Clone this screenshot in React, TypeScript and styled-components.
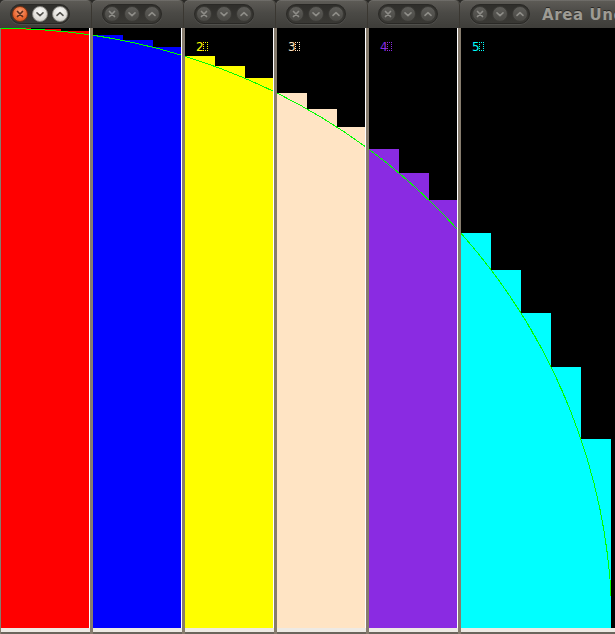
import React from 'react';
import styled, { createGlobalStyle } from 'styled-components';

const ELLIPSE_A = 611;
const ELLIPSE_B = 600;
const ORIGIN_X = 1;
const PLOT_H = 600;
const BAR_W = 30;
const DOMAIN_END = 611;

const GlobalStyle = createGlobalStyle`
  html, body {
    margin: 0;
    padding: 0;
    background: #2c2b28;
    overflow: hidden;
  }
  body {
    width: 615px;
    height: 634px;
  }
`;

const Desktop = styled.div`
  display: flex;
  width: 615px;
  height: 634px;
  overflow: hidden;
`;

const Win = styled.div<{ $w: number }>`
  flex: 0 0 ${(p) => p.$w}px;
  width: ${(p) => p.$w}px;
  display: flex;
  flex-direction: column;
`;

const TitleBar = styled.div`
  height: 28px;
  flex: 0 0 28px;
  box-sizing: border-box;
  display: flex;
  align-items: flex-start;
  padding: 4px 0 0 10px;
  border-radius: 5px 5px 0 0;
  background: linear-gradient(#5e5c57, #4b4a46 45%, #3e3d39);
  box-shadow: inset 0 1px 0 rgba(255, 255, 255, 0.1), inset -1px 0 0 #3a3731;
  overflow: hidden;
  white-space: nowrap;
`;

const ButtonPill = styled.div`
  flex: 0 0 auto;
  box-sizing: border-box;
  width: 60px;
  height: 20px;
  display: flex;
  gap: 4px;
  padding: 1px 1px;
  border: 1px solid #2a2926;
  border-radius: 10px;
  background: linear-gradient(#2f2e2b, #3a3935);
  box-shadow: 0 1px 0 rgba(255, 255, 255, 0.08);
`;

const CircleButton = styled.div<{ $kind: 'close' | 'light' | 'dim' }>`
  width: 16px;
  height: 16px;
  box-sizing: border-box;
  border-radius: 50%;
  display: flex;
  align-items: center;
  justify-content: center;
  border: 1px solid
    ${(p) => (p.$kind === 'close' ? '#7a3414' : p.$kind === 'light' ? '#8d8b86' : '#3b3a36')};
  background: ${(p) =>
    p.$kind === 'close'
      ? 'radial-gradient(circle at 50% 35%, #f8a078, #ea6a35 55%, #c9480f)'
      : p.$kind === 'light'
      ? 'radial-gradient(circle at 50% 35%, #fbfaf8, #e3e1dc 55%, #c4c2bd)'
      : 'linear-gradient(#5d5c58, #4a4945)'};
  svg {
    display: block;
  }
`;

const Title = styled.span`
  margin: 1px 0 0 12px;
  font-family: 'DejaVu Sans', sans-serif;
  font-weight: bold;
  font-size: 15px;
  line-height: 20px;
  letter-spacing: 0.6px;
  color: #9d9b94;
  text-shadow: 0 -1px 0 #2a2926;
`;

const Frame = styled.div`
  flex: 1 1 auto;
  display: flex;
  flex-direction: column;
  border-left: 1px solid #867c6e;
  border-right: 2px solid #867c6e;
`;

const Canvas = styled.div`
  position: relative;
  height: ${PLOT_H}px;
  flex: 0 0 ${PLOT_H}px;
  background: #000;
  border-right: 1px solid #ffffff;
  overflow: hidden;
  svg {
    display: block;
  }
`;

const Label = styled.div<{ $color: string }>`
  position: absolute;
  left: 11px;
  top: 13px;
  font-family: 'DejaVu Sans', sans-serif;
  font-size: 12px;
  line-height: 12px;
  color: ${(p) => p.$color};
  white-space: nowrap;
`;

const Tofu = styled.span`
  display: inline-block;
  width: 3px;
  height: 7px;
  margin-left: -1px;
  border: 1px dotted currentColor;
  vertical-align: baseline;
`;

const BottomEdge = styled.div`
  flex: 0 0 6px;
  height: 6px;
  box-sizing: border-box;
  background: #eeeae4;
  border-bottom: 2px solid #6b655c;
`;

type Kind = 'close' | 'light' | 'dim';

const Icon: React.FC<{ type: 'x' | 'down' | 'up'; color: string }> = ({ type, color }) => (
  <svg width="14" height="14" viewBox="0 0 14 14">
    {type === 'x' && (
      <path d="M4.5 4.5 L9.5 9.5 M9.5 4.5 L4.5 9.5" stroke={color} strokeWidth="1.7" strokeLinecap="round" fill="none" />
    )}
    {type === 'down' && (
      <path d="M4 5.8 L7 8.6 L10 5.8" stroke={color} strokeWidth="1.6" strokeLinecap="round" strokeLinejoin="round" fill="none" />
    )}
    {type === 'up' && (
      <path d="M4 8.4 L7 5.6 L10 8.4" stroke={color} strokeWidth="1.6" strokeLinecap="round" strokeLinejoin="round" fill="none" />
    )}
  </svg>
);

const Buttons: React.FC<{ focused: boolean }> = ({ focused }) => {
  const closeKind: Kind = focused ? 'close' : 'dim';
  const otherKind: Kind = focused ? 'light' : 'dim';
  const closeColor = focused ? '#5a2c1a' : '#8e8d88';
  const otherColor = focused ? '#55544f' : '#8e8d88';
  return (
    <ButtonPill>
      <CircleButton $kind={closeKind}>
        <Icon type="x" color={closeColor} />
      </CircleButton>
      <CircleButton $kind={otherKind}>
        <Icon type="down" color={otherColor} />
      </CircleButton>
      <CircleButton $kind={otherKind}>
        <Icon type="up" color={otherColor} />
      </CircleButton>
    </ButtonPill>
  );
};

interface WinSpec {
  index: number;
  color: string;
  width: number;
}

const WINDOWS: WinSpec[] = [
  { index: 0, color: '#ff0000', width: 92 },
  { index: 1, color: '#0000ff', width: 92 },
  { index: 2, color: '#ffff00', width: 92 },
  { index: 3, color: '#ffe4c4', width: 92 },
  { index: 4, color: '#8a2be2', width: 92 },
  { index: 5, color: '#00ffff', width: 200 },
];

const curveTop = (globalX: number) => {
  const dx = (globalX - ORIGIN_X) / ELLIPSE_A;
  const h = ELLIPSE_B * Math.sqrt(Math.max(0, 1 - dx * dx));
  return Math.round(PLOT_H - h);
};

const Chart: React.FC<{ left: number; width: number; color: string; id: number }> = ({
  left,
  width,
  color,
  id,
}) => {
  const bars: { x: number; w: number; y: number }[] = [];
  for (let x = 0; x < width; x += BAR_W) {
    const gx = left + x;
    if (gx >= DOMAIN_END) break;
    bars.push({ x, w: Math.min(BAR_W, width - x, DOMAIN_END - gx), y: curveTop(gx) });
  }
  const clipW = Math.max(0, Math.min(width, DOMAIN_END - left));
  return (
    <svg width={width} height={PLOT_H} viewBox={`0 0 ${width} ${PLOT_H}`}>
      <defs>
        <clipPath id={`plot-clip-${id}`}>
          <rect x="0" y="0" width={clipW} height={PLOT_H} />
        </clipPath>
      </defs>
      {bars.map((b, i) => (
        <rect key={i} x={b.x} y={b.y} width={b.w} height={PLOT_H - b.y} fill={color} shapeRendering="crispEdges" />
      ))}
      <ellipse
        clipPath={`url(#plot-clip-${id})`}
        cx={ORIGIN_X - left}
        cy={PLOT_H}
        rx={ELLIPSE_A}
        ry={ELLIPSE_B - 0.5}
        fill="none"
        stroke="#00ff00"
        strokeWidth="1"
        shapeRendering="crispEdges"
      />
    </svg>
  );
};

export default function App() {
  let offset = 0;
  return (
    <>
      <GlobalStyle />
      <Desktop>
        {WINDOWS.map((w) => {
          const winLeft = offset;
          offset += w.width;
          const contentLeft = winLeft + 1;
          const contentWidth = w.width - 1 - 2 - 1;
          return (
            <Win key={w.index} $w={w.width}>
              <TitleBar>
                <Buttons focused={w.index === 0} />
                {w.index === 5 && <Title>Area Under Curve</Title>}
              </TitleBar>
              <Frame>
                <Canvas>
                  <Chart id={w.index} left={contentLeft} width={contentWidth} color={w.color} />
                  <Label $color={w.color}>
                    {w.index}
                    <Tofu />
                  </Label>
                </Canvas>
                <BottomEdge />
              </Frame>
            </Win>
          );
        })}
      </Desktop>
    </>
  );
}
